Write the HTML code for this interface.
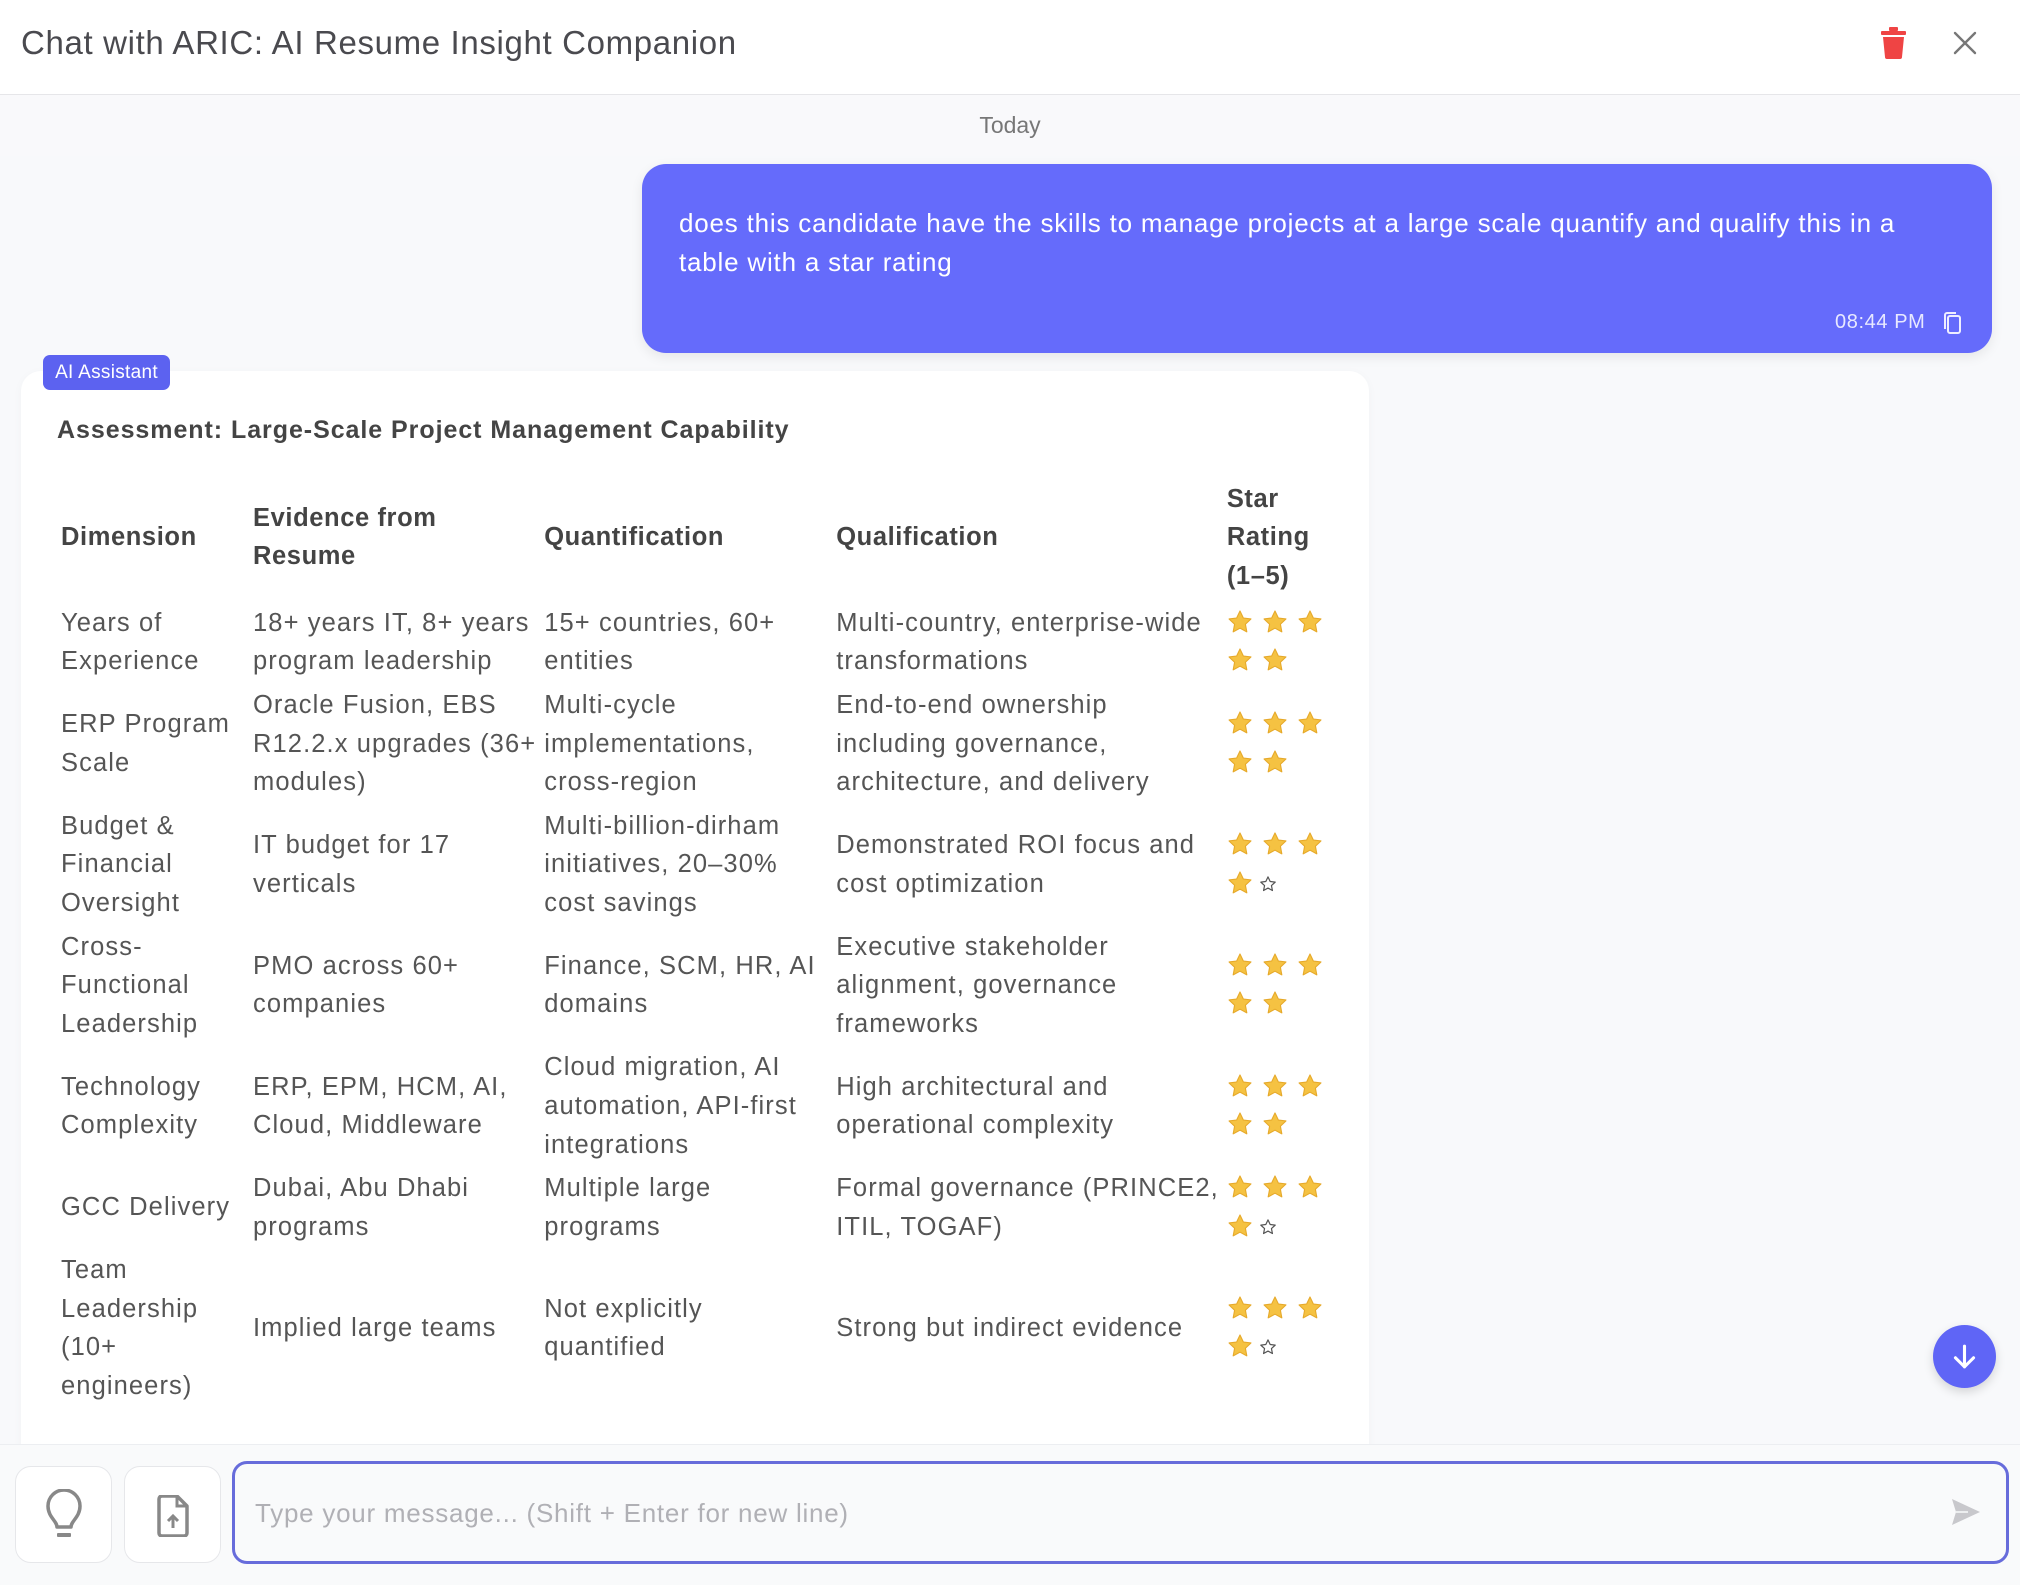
<!DOCTYPE html>
<html><head><meta charset="utf-8">
<style>
*{box-sizing:border-box;margin:0;padding:0}
body{width:2020px;height:1585px;overflow:hidden;background:#f8f9fb;font-family:"Liberation Sans",sans-serif;position:relative;color:#555}
.hdr{position:absolute;left:0;top:0;width:2020px;height:95px;background:#fff;border-bottom:1px solid #e6e6e9}
.hdr h1{position:absolute;left:21px;top:24px;font-size:33px;font-weight:normal;color:#4a4a4f;letter-spacing:0.65px}
.today{position:absolute;left:0;top:95px;width:2020px;height:61px;background:#f9f9fb;text-align:center;font-size:23px;line-height:61px;color:#777}
.bubble{position:absolute;left:642px;top:164px;width:1350px;height:189px;background:#656bfb;border-radius:24px;color:#fff;box-shadow:0 4px 12px rgba(0,0,0,.08)}
.bubble p{position:absolute;left:37px;top:40px;font-size:26px;line-height:39px;white-space:nowrap;letter-spacing:0.8px}
.time{position:absolute;left:1835px;top:311px;font-size:20px;color:#e8e9ff;letter-spacing:0.6px}
.badge{position:absolute;left:43px;top:355px;width:127px;height:35px;background:#5c62f0;color:#fff;border-radius:7px;font-size:19px;line-height:35px;text-align:center;z-index:2;letter-spacing:0.3px}
.card{position:absolute;left:21px;top:371px;width:1348px;height:1100px;background:#fff;border-radius:20px;box-shadow:0 2px 10px rgba(0,0,0,.03)}
.card h2{position:absolute;left:36px;top:45px;font-size:25px;font-weight:bold;color:#444;letter-spacing:0.95px}
table{position:absolute;left:36px;top:106px;border-collapse:collapse;table-layout:fixed}
td,th{padding:2.5px 4px;font-size:25.5px;line-height:38.6px;vertical-align:middle;text-align:left;white-space:nowrap;color:#555;font-weight:normal;letter-spacing:1.1px}
th{font-weight:bold;color:#444;padding-bottom:6px;letter-spacing:0.6px}
.s{display:inline-block;width:26px;height:26px;margin-right:9px;vertical-align:-4px}
.e{display:inline-block;width:18px;height:18px;vertical-align:-1px;margin-left:-3px}
.bot{position:absolute;left:0;top:1444px;width:2020px;height:141px;background:#f9fafb;border-top:1px solid #eceef1}
.btn{position:absolute;top:1466px;width:97px;height:97px;border:1px solid #e6e7ea;border-radius:16px;background:#fff}
.inp{position:absolute;left:232px;top:1461px;width:1777px;height:103px;border:3px solid #676cdb;border-radius:15px;background:#f9fafb}
.inp span{position:absolute;left:20px;top:34px;font-size:26px;color:#b0b0b5;letter-spacing:0.75px}
.down{position:absolute;left:1933px;top:1325px;width:63px;height:63px;border-radius:50%;background:#5f65f6;box-shadow:0 4px 10px rgba(0,0,0,.15)}
</style></head><body>
<svg width="0" height="0" style="position:absolute"><defs>
<symbol id="st" viewBox="0 0 24 24"><path d="M12 1.8l3.1 6.5 7 .9-5.1 4.9 1.3 7-6.3-3.4-6.3 3.4 1.3-7L1.9 9.2l7-.9z" fill="#f5c242" stroke="#e6a92a" stroke-width="1" stroke-linejoin="round"/></symbol>
<symbol id="es" viewBox="0 0 24 24"><path d="M12 2.5l2.9 6.2 6.7.8-5 4.6 1.3 6.6L12 17.4l-5.9 3.3 1.3-6.6-5-4.6 6.7-.8z" fill="none" stroke="#555" stroke-width="1.6" stroke-linejoin="round"/></symbol>
</defs></svg>

<div class="hdr"><h1>Chat with ARIC: AI Resume Insight Companion</h1>
<svg style="position:absolute;left:1881px;top:27px" width="25" height="32" viewBox="0 0 25 32"><rect x="8" y="0" width="9" height="4" rx="1" fill="#ef4444"/><rect x="0" y="4" width="25" height="4" rx="1" fill="#ef4444"/><path d="M2 10h21l-2 20a2 2 0 0 1-2 2H6a2 2 0 0 1-2-2z" fill="#ef4444"/></svg>
<svg style="position:absolute;left:1953px;top:31px" width="24" height="24" viewBox="0 0 24 24"><path d="M2 2L22 22M22 2L2 22" stroke="#777" stroke-width="2.4" stroke-linecap="round"/></svg>
</div>
<div class="today">Today</div>

<div class="bubble"><p>does this candidate have the skills to manage projects at a large scale quantify and qualify this in a<br>table with a star rating</p></div>
<div class="time">08:44 PM</div>
<svg style="position:absolute;left:1942px;top:311px" width="20" height="24" viewBox="0 0 20 24"><rect x="6" y="5" width="12" height="17" rx="2" fill="none" stroke="#eef" stroke-width="2"/><path d="M3 18V4a2 2 0 0 1 2-2h9" fill="none" stroke="#eef" stroke-width="2"/></svg>

<div class="badge">AI Assistant</div>
<div class="card">
<h2>Assessment: Large-Scale Project Management Capability</h2>
<table>
<colgroup><col style="width:192px"><col style="width:288px"><col style="width:292px"><col style="width:386px"><col style="width:140px"></colgroup>
<tr><th>Dimension</th><th>Evidence from<br>Resume</th><th>Quantification</th><th>Qualification</th><th>Star<br>Rating<br>(1–5)</th></tr>
<tr><td>Years of<br>Experience</td><td>18+ years IT, 8+ years<br>program leadership</td><td>15+ countries, 60+<br>entities</td><td>Multi-country, enterprise-wide<br>transformations</td><td>
<svg class="s"><use href="#st"/></svg><svg class="s"><use href="#st"/></svg><svg class="s"><use href="#st"/></svg><br><svg class="s"><use href="#st"/></svg><svg class="s"><use href="#st"/></svg></td></tr>
<tr><td>ERP Program<br>Scale</td><td>Oracle Fusion, EBS<br>R12.2.x upgrades (36+<br>modules)</td><td>Multi-cycle<br>implementations,<br>cross-region</td><td>End-to-end ownership<br>including governance,<br>architecture, and delivery</td><td>
<svg class="s"><use href="#st"/></svg><svg class="s"><use href="#st"/></svg><svg class="s"><use href="#st"/></svg><br><svg class="s"><use href="#st"/></svg><svg class="s"><use href="#st"/></svg></td></tr>
<tr><td>Budget &amp;<br>Financial<br>Oversight</td><td>IT budget for 17<br>verticals</td><td>Multi-billion-dirham<br>initiatives, 20–30%<br>cost savings</td><td>Demonstrated ROI focus and<br>cost optimization</td><td>
<svg class="s"><use href="#st"/></svg><svg class="s"><use href="#st"/></svg><svg class="s"><use href="#st"/></svg><br><svg class="s"><use href="#st"/></svg><svg class="e"><use href="#es"/></svg></td></tr>
<tr><td>Cross-<br>Functional<br>Leadership</td><td>PMO across 60+<br>companies</td><td>Finance, SCM, HR, AI<br>domains</td><td>Executive stakeholder<br>alignment, governance<br>frameworks</td><td>
<svg class="s"><use href="#st"/></svg><svg class="s"><use href="#st"/></svg><svg class="s"><use href="#st"/></svg><br><svg class="s"><use href="#st"/></svg><svg class="s"><use href="#st"/></svg></td></tr>
<tr><td>Technology<br>Complexity</td><td>ERP, EPM, HCM, AI,<br>Cloud, Middleware</td><td>Cloud migration, AI<br>automation, API-first<br>integrations</td><td>High architectural and<br>operational complexity</td><td>
<svg class="s"><use href="#st"/></svg><svg class="s"><use href="#st"/></svg><svg class="s"><use href="#st"/></svg><br><svg class="s"><use href="#st"/></svg><svg class="s"><use href="#st"/></svg></td></tr>
<tr><td>GCC Delivery</td><td>Dubai, Abu Dhabi<br>programs</td><td>Multiple large<br>programs</td><td>Formal governance (PRINCE2,<br>ITIL, TOGAF)</td><td>
<svg class="s"><use href="#st"/></svg><svg class="s"><use href="#st"/></svg><svg class="s"><use href="#st"/></svg><br><svg class="s"><use href="#st"/></svg><svg class="e"><use href="#es"/></svg></td></tr>
<tr><td>Team<br>Leadership<br>(10+<br>engineers)</td><td>Implied large teams</td><td>Not explicitly<br>quantified</td><td>Strong but indirect evidence</td><td>
<svg class="s"><use href="#st"/></svg><svg class="s"><use href="#st"/></svg><svg class="s"><use href="#st"/></svg><br><svg class="s"><use href="#st"/></svg><svg class="e"><use href="#es"/></svg></td></tr>
</table>
</div>

<div class="down"><svg style="position:absolute;left:16px;top:16px" width="31" height="31" viewBox="0 0 24 24"><path d="M12 4v16M5 13l7 7 7-7" fill="none" stroke="#fff" stroke-width="2.4" stroke-linecap="round" stroke-linejoin="round"/></svg></div>

<div class="bot"></div>
<div class="btn" style="left:15px"><svg style="position:absolute;left:28px;top:22px" width="40" height="54" viewBox="0 0 40 54"><path d="M13 38c0-6-9-10-9-21a16 16 0 0 1 32 0c0 11-9 15-9 21z" fill="none" stroke="#888" stroke-width="3.5" stroke-linejoin="round"/><rect x="13" y="44" width="14" height="4" rx="1" fill="#888"/></svg></div>
<div class="btn" style="left:124px"><svg style="position:absolute;left:31px;top:28px" width="34" height="42" viewBox="0 0 34 42"><path d="M3 4a3 3 0 0 1 3-3h15l10 10v27a3 3 0 0 1-3 3H6a3 3 0 0 1-3-3z" fill="none" stroke="#888" stroke-width="3.5" stroke-linejoin="round"/><path d="M21 1v10h10" fill="none" stroke="#888" stroke-width="3"/><path d="M17 33V21M12 26l5-5 5 5" fill="none" stroke="#888" stroke-width="3"/></svg></div>
<div class="inp"><span>Type your message... (Shift + Enter for new line)</span>
<svg style="position:absolute;left:1716px;top:34px" width="30" height="28" viewBox="0 0 30 28"><path d="M1 1l28 13L1 27l4-13z" fill="#c8c8cc"/><path d="M5 14h12" stroke="#f9fafb" stroke-width="1.5"/></svg></div>
</body></html>
